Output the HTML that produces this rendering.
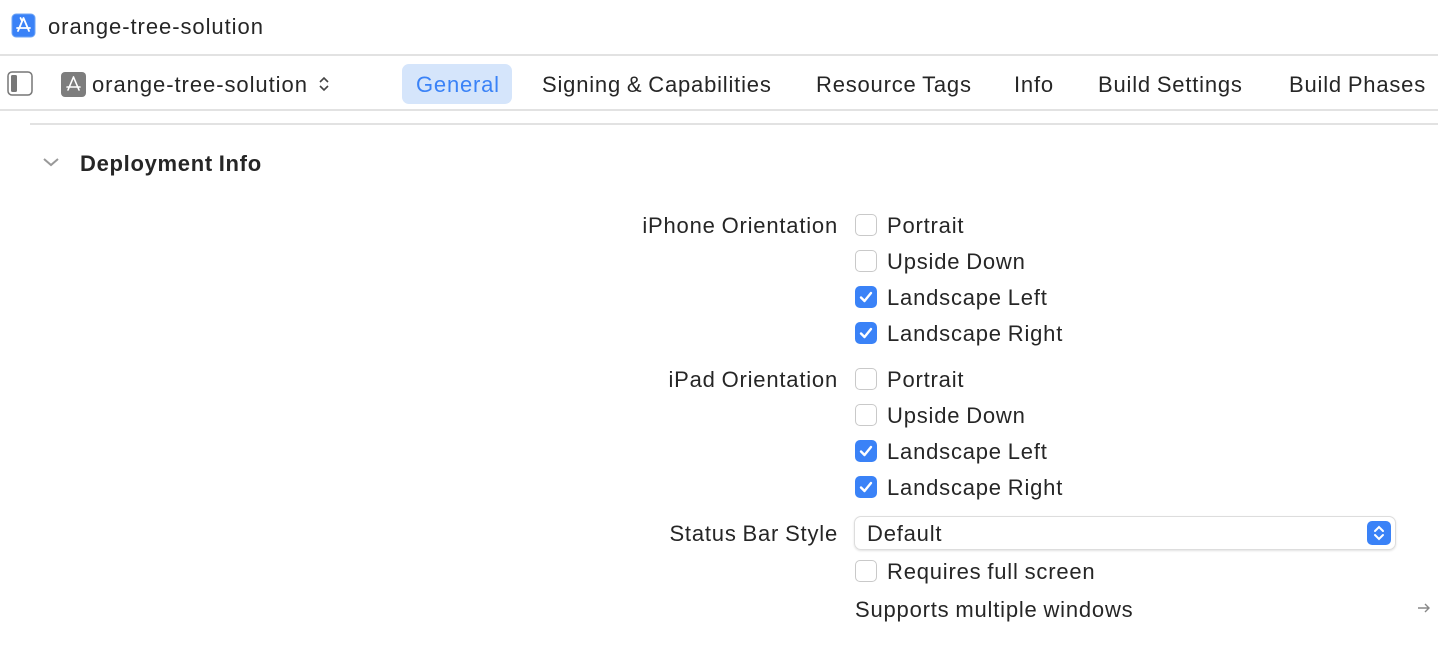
<!DOCTYPE html>
<html><head><meta charset="utf-8"><style>
body{margin:0;width:1438px;height:658px;background:#fff;font-family:"Liberation Sans",sans-serif;color:#262626;position:relative;overflow:hidden;font-size:22px;letter-spacing:0.8px;word-spacing:-1px}
.a{position:absolute;white-space:nowrap;line-height:24px}
.hr{position:absolute;height:2px;background:#e2e2e2}
.cb{position:absolute;left:855px;width:20px;height:20px;border:1px solid #c9c9c9;border-radius:5px;background:#fff}
.cb.on{background:#3a82f7;border-color:#3a82f7}
.cb.on svg{position:absolute;left:3px;top:3px}
.lbl{position:absolute;right:600px;text-align:right;white-space:nowrap;line-height:24px}
.t{position:absolute;left:887px;white-space:nowrap;line-height:24px}
</style></head><body>
<svg class="a" style="left:11px;top:13px" width="25" height="25" viewBox="0 0 25 25"><rect x="1" y="1" width="23" height="23" rx="4" fill="#3a82f7" stroke="#6fa5f5"/><path d="M12.5 5 L7 18 M12.5 5 L18 18 M6 15 H19 M11 8 L9.5 5" stroke="#fff" stroke-width="1.8" fill="none" stroke-linecap="round"/></svg>
<div class="a" style="left:48px;top:15px;letter-spacing:0.95px">orange-tree-solution</div>
<div class="hr" style="left:0;top:54px;width:1438px"></div>
<svg class="a" style="left:7px;top:71px" width="27" height="26"><rect x="1" y="1" width="24" height="23" rx="4" fill="none" stroke="#777" stroke-width="1.5"/><rect x="4" y="4" width="6" height="17" rx="1.5" fill="#777"/></svg>
<svg class="a" style="left:61px;top:72px" width="25" height="25"><rect x="0" y="0" width="25" height="25" rx="4" fill="#7d7d7d"/><path d="M12.5 5 L7 18 M12.5 5 L18 18 M6 15 H19" stroke="#fff" stroke-width="1.6" fill="none" stroke-linecap="round"/></svg>
<div class="a" style="left:92px;top:73px;letter-spacing:0.95px">orange-tree-solution</div>
<svg class="a" style="left:318px;top:76px" width="12" height="16"><path d="M2 6 L6 2 L10 6 M2 10 L6 14 L10 10" stroke="#444" stroke-width="1.6" fill="none"/></svg>
<div class="a" style="left:402px;top:64px;width:110px;height:40px;background:#d5e5fb;border-radius:7px"></div>
<div class="a" style="left:416px;top:73px;color:#3a82f7">General</div>
<div class="a" style="left:542px;top:73px">Signing &amp; Capabilities</div>
<div class="a" style="left:816px;top:73px">Resource Tags</div>
<div class="a" style="left:1014px;top:73px">Info</div>
<div class="a" style="left:1098px;top:73px">Build Settings</div>
<div class="a" style="left:1289px;top:73px">Build Phases</div>
<div class="hr" style="left:0;top:109px;width:1438px"></div>
<div class="hr" style="left:30px;top:123px;width:1408px"></div>
<svg class="a" style="left:42px;top:156px" width="18" height="12"><path d="M2 3 L9 9 L16 3" stroke="#999" stroke-width="2" fill="none"/></svg>
<div class="a" style="left:80px;top:152px;font-weight:bold;letter-spacing:0.7px">Deployment Info</div>

<div class="lbl" style="top:214px">iPhone Orientation</div>
<div class="cb" style="top:214px"></div><div class="t" style="top:214px">Portrait</div>
<div class="cb" style="top:250px"></div><div class="t" style="top:250px">Upside Down</div>
<div class="cb on" style="top:286px"><svg width="14" height="14"><path d="M2 7.5 L5.5 11 L12 3" stroke="#fff" stroke-width="2.4" fill="none" stroke-linecap="round" stroke-linejoin="round"/></svg></div><div class="t" style="top:286px">Landscape Left</div>
<div class="cb on" style="top:322px"><svg width="14" height="14"><path d="M2 7.5 L5.5 11 L12 3" stroke="#fff" stroke-width="2.4" fill="none" stroke-linecap="round" stroke-linejoin="round"/></svg></div><div class="t" style="top:322px">Landscape Right</div>

<div class="lbl" style="top:368px">iPad Orientation</div>
<div class="cb" style="top:368px"></div><div class="t" style="top:368px">Portrait</div>
<div class="cb" style="top:404px"></div><div class="t" style="top:404px">Upside Down</div>
<div class="cb on" style="top:440px"><svg width="14" height="14"><path d="M2 7.5 L5.5 11 L12 3" stroke="#fff" stroke-width="2.4" fill="none" stroke-linecap="round" stroke-linejoin="round"/></svg></div><div class="t" style="top:440px">Landscape Left</div>
<div class="cb on" style="top:476px"><svg width="14" height="14"><path d="M2 7.5 L5.5 11 L12 3" stroke="#fff" stroke-width="2.4" fill="none" stroke-linecap="round" stroke-linejoin="round"/></svg></div><div class="t" style="top:476px">Landscape Right</div>

<div class="lbl" style="top:522px">Status Bar Style</div>
<div class="a" style="left:854px;top:516px;width:540px;height:32px;border:1px solid #ddd;border-radius:7px;box-shadow:0 1px 2px rgba(0,0,0,.12)"></div>
<div class="a" style="left:867px;top:522px">Default</div>
<div class="a" style="left:1367px;top:521px;width:24px;height:24px;background:#3a82f7;border-radius:5px"></div>
<svg class="a" style="left:1373px;top:524px" width="12" height="18"><path d="M2 7 L6 3 L10 7 M2 11 L6 15 L10 11" stroke="#fff" stroke-width="2" fill="none" stroke-linecap="round"/></svg>
<div class="cb" style="top:560px"></div><div class="t" style="top:560px">Requires full screen</div>
<div class="a" style="left:855px;top:598px">Supports multiple windows</div>
<svg class="a" style="left:1417px;top:602px" width="14" height="12"><path d="M1 6 H12 M8 2 L12 6 L8 10" stroke="#888" stroke-width="1.4" fill="none"/></svg>
</body></html>
